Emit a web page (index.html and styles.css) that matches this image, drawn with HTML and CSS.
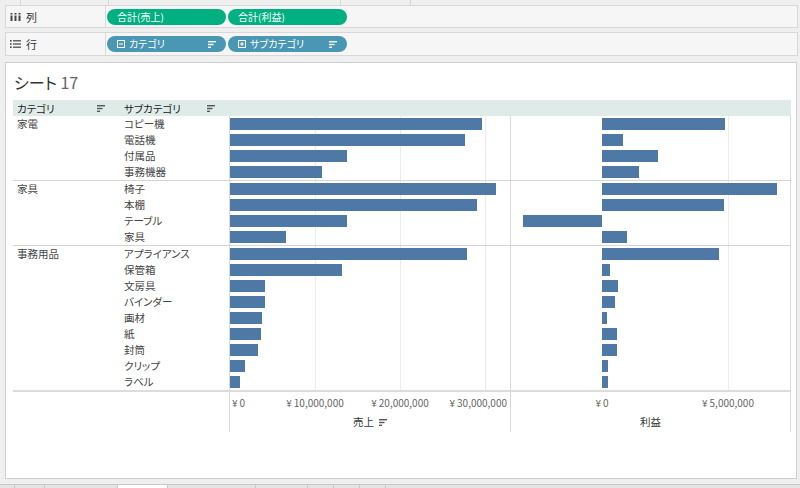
FILE: index.html
```html
<!DOCTYPE html>
<html lang="ja">
<head>
<meta charset="utf-8">
<title>シート 17</title>
<link rel="stylesheet" href="styles.css">
</head>
<body>
<div class="toolbar"><span class="tb tb1"></span><span class="tb tb2"></span><span class="tb tb3"></span><span class="tb tb4"></span></div>

<div class="shelf shelf1">
  <div class="shelf-label">
    <svg class="shelf-icon" width="11" height="8" viewBox="0 0 11 8"><rect x="0.5" y="0" width="2" height="1.5"/><rect x="4.5" y="0" width="2" height="1.5"/><rect x="8.5" y="0" width="2" height="1.5"/><rect x="0.5" y="2.5" width="2" height="5.5"/><rect x="4.5" y="2.5" width="2" height="5.5"/><rect x="8.5" y="2.5" width="2" height="5.5"/></svg>
    <span>列</span>
  </div>
  <div class="shelf-pills">
    <div class="pill green"><span>合計(売上)</span></div>
    <div class="pill green"><span>合計(利益)</span></div>
  </div>
</div>

<div class="shelf shelf2">
  <div class="shelf-label">
    <svg class="shelf-icon" width="11" height="8" viewBox="0 0 11 8"><rect x="0" y="0" width="1.6" height="1.6"/><rect x="3" y="0.2" width="8" height="1.2"/><rect x="0" y="3.2" width="1.6" height="1.6"/><rect x="3" y="3.4" width="8" height="1.2"/><rect x="0" y="6.4" width="1.6" height="1.6"/><rect x="3" y="6.6" width="8" height="1.2"/></svg>
    <span>行</span>
  </div>
  <div class="shelf-pills">
    <div class="pill blue">
      <svg class="pm" width="8" height="8" viewBox="0 0 8 8"><rect x="0.5" y="0.5" width="7" height="7" fill="none" stroke="#fff" stroke-width="1"/><rect x="2" y="3.5" width="4" height="1" fill="#fff"/></svg>
      <span>カテゴリ</span>
      <svg class="sort" width="8" height="7" viewBox="0 0 8 7"><rect x="0" y="0" width="8" height="1.4"/><rect x="0" y="2.8" width="5.5" height="1.4"/><rect x="0" y="5.6" width="3" height="1.4"/></svg>
    </div>
    <div class="pill blue">
      <svg class="pm" width="8" height="8" viewBox="0 0 8 8"><rect x="0.5" y="0.5" width="7" height="7" fill="none" stroke="#fff" stroke-width="1"/><rect x="2" y="3.5" width="4" height="1" fill="#fff"/><rect x="3.5" y="2" width="1" height="4" fill="#fff"/></svg>
      <span>サブカテゴリ</span>
      <svg class="sort" width="8" height="7" viewBox="0 0 8 7"><rect x="0" y="0" width="8" height="1.4"/><rect x="0" y="2.8" width="5.5" height="1.4"/><rect x="0" y="5.6" width="3" height="1.4"/></svg>
    </div>
  </div>
</div>

<div class="panel">
  <div class="title">シート <span class="num">17</span></div>
  <div class="table">
    <div class="cols header">
      <div class="hcell hcat"><span>カテゴリ</span><svg class="sort" width="8" height="7" viewBox="0 0 8 7"><rect x="0" y="0" width="8" height="1.4"/><rect x="0" y="2.8" width="5.5" height="1.4"/><rect x="0" y="5.6" width="3" height="1.4"/></svg></div>
      <div class="hcell hsub"><span>サブカテゴリ</span><svg class="sort" width="8" height="7" viewBox="0 0 8 7"><rect x="0" y="0" width="8" height="1.4"/><rect x="0" y="2.8" width="5.5" height="1.4"/><rect x="0" y="5.6" width="3" height="1.4"/></svg></div>
      <div></div><div></div>
    </div>

    <div class="cols group">
      <div class="cat span4">家電</div>
      <div class="sub">コピー機</div><div class="p1"><div class="bar" style="width:252px"></div></div><div class="p2"><div class="neg"></div><div class="pos"><div class="bar" style="width:123px"></div></div></div>
      <div class="sub">電話機</div><div class="p1"><div class="bar" style="width:235px"></div></div><div class="p2"><div class="neg"></div><div class="pos"><div class="bar" style="width:21px"></div></div></div>
      <div class="sub">付属品</div><div class="p1"><div class="bar" style="width:117px"></div></div><div class="p2"><div class="neg"></div><div class="pos"><div class="bar" style="width:56px"></div></div></div>
      <div class="sub">事務機器</div><div class="p1"><div class="bar" style="width:92px"></div></div><div class="p2"><div class="neg"></div><div class="pos"><div class="bar" style="width:37px"></div></div></div>
    </div>
    <div class="sep"></div>
    <div class="cols group">
      <div class="cat span4">家具</div>
      <div class="sub">椅子</div><div class="p1"><div class="bar" style="width:266px"></div></div><div class="p2"><div class="neg"></div><div class="pos"><div class="bar" style="width:175px"></div></div></div>
      <div class="sub">本棚</div><div class="p1"><div class="bar" style="width:247px"></div></div><div class="p2"><div class="neg"></div><div class="pos"><div class="bar" style="width:122px"></div></div></div>
      <div class="sub">テーブル</div><div class="p1"><div class="bar" style="width:117px"></div></div><div class="p2"><div class="neg"><div class="bar" style="width:79px"></div></div><div class="pos"></div></div>
      <div class="sub">家具</div><div class="p1"><div class="bar" style="width:56px"></div></div><div class="p2"><div class="neg"></div><div class="pos"><div class="bar" style="width:25px"></div></div></div>
    </div>
    <div class="sep"></div>
    <div class="cols group">
      <div class="cat span9">事務用品</div>
      <div class="sub">アプライアンス</div><div class="p1"><div class="bar" style="width:237px"></div></div><div class="p2"><div class="neg"></div><div class="pos"><div class="bar" style="width:117px"></div></div></div>
      <div class="sub">保管箱</div><div class="p1"><div class="bar" style="width:112px"></div></div><div class="p2"><div class="neg"></div><div class="pos"><div class="bar" style="width:8px"></div></div></div>
      <div class="sub">文房具</div><div class="p1"><div class="bar" style="width:35px"></div></div><div class="p2"><div class="neg"></div><div class="pos"><div class="bar" style="width:16px"></div></div></div>
      <div class="sub">バインダー</div><div class="p1"><div class="bar" style="width:35px"></div></div><div class="p2"><div class="neg"></div><div class="pos"><div class="bar" style="width:13px"></div></div></div>
      <div class="sub">画材</div><div class="p1"><div class="bar" style="width:32px"></div></div><div class="p2"><div class="neg"></div><div class="pos"><div class="bar" style="width:5px"></div></div></div>
      <div class="sub">紙</div><div class="p1"><div class="bar" style="width:31px"></div></div><div class="p2"><div class="neg"></div><div class="pos"><div class="bar" style="width:15px"></div></div></div>
      <div class="sub">封筒</div><div class="p1"><div class="bar" style="width:28px"></div></div><div class="p2"><div class="neg"></div><div class="pos"><div class="bar" style="width:15px"></div></div></div>
      <div class="sub">クリップ</div><div class="p1"><div class="bar" style="width:15px"></div></div><div class="p2"><div class="neg"></div><div class="pos"><div class="bar" style="width:6px"></div></div></div>
      <div class="sub">ラベル</div><div class="p1"><div class="bar" style="width:10px"></div></div><div class="p2"><div class="neg"></div><div class="pos"><div class="bar" style="width:6px"></div></div></div>
    </div>
    <div class="axisline"></div>
    <div class="cols axis">
      <div></div><div></div>
      <div class="ap1">
        <div class="ticks"><span class="t t0"><span class="yen">¥</span>0</span><span class="t t1"><span class="yen">¥</span>10,000,000</span><span class="t t2"><span class="yen">¥</span>20,000,000</span><span class="t t3"><span class="yen">¥</span>30,000,000</span></div>
        <div class="atitle"><span>売上</span><svg class="sort" width="8" height="7" viewBox="0 0 8 7"><rect x="0" y="0" width="8" height="1.4"/><rect x="0" y="2.8" width="5.5" height="1.4"/><rect x="0" y="5.6" width="3" height="1.4"/></svg></div>
      </div>
      <div class="ap2">
        <div class="ticks"><span class="t u0"><span class="yen">¥</span>0</span><span class="t u1"><span class="yen">¥</span>5,000,000</span></div>
        <div class="atitle"><span>利益</span></div>
      </div>
    </div>
  </div>
</div>

<div class="tabs"><span class="tab w14"></span><span class="tab w29"></span><span class="tab w72"></span><span class="tab active"></span><span class="tab w87"></span><span class="tab w51"></span><span class="tab w25"></span><span class="tab w25"></span><span class="tab w25"></span></div>
</body>
</html>
```

FILE: styles.css
```css
html, body {
  margin: 0;
  padding: 0;
}
body {
  width: 800px;
  height: 488px;
  overflow: hidden;
  background: #efefef;
  font-family: "Noto Sans CJK JP", "Noto Sans", sans-serif;
  font-feature-settings: "palt";
  display: flex;
  flex-direction: column;
}

/* top remnant toolbar */
.toolbar {
  height: 5px;
  display: flex;
  flex-shrink: 0;
}
.tb { border-right: 1px solid #d6d6d6; }
.tb1 { width: 20px; }
.tb2 { width: 87px; }
.tb3 { width: 231px; }
.tb4 { width: 69px; }

/* shelves */
.shelf {
  margin-left: 5px;
  width: 793px;
  box-sizing: border-box;
  border: 1px solid #d8d8d8;
  background: #f6f6f6;
  display: flex;
  flex-shrink: 0;
}
.shelf1 { height: 23px; }
.shelf2 { height: 24px; margin-top: 4px; }
.shelf-label {
  width: 100px;
  box-sizing: border-box;
  border-right: 1px solid #d8d8d8;
  display: flex;
  align-items: center;
  gap: 5px;
  padding-left: 4px;
  font-size: 11px;
  color: #333;
}
.shelf-icon { fill: #444; }
.shelf-pills {
  display: flex;
  align-items: center;
  gap: 2px;
  padding-left: 1px;
}
.pill {
  width: 119px;
  height: 16px;
  box-sizing: border-box;
  border-radius: 8px;
  display: flex;
  align-items: center;
  padding: 0 10px;
  color: #fff;
  font-size: 10px;
  line-height: 16px;
  white-space: nowrap;
}
.pill .pm { margin-right: 4px; flex-shrink: 0; }
.pill .sort { margin-left: auto; fill: #fff; }
.green { background: #00b080; }
.blue { background: #4a97b3; }

/* worksheet panel */
.panel {
  margin: 6px 0 0 5px;
  width: 792px;
  height: 417px;
  box-sizing: border-box;
  border: 1px solid #d0d0d0;
  background: #fff;
  flex-shrink: 0;
}
.title {
  margin: 9px 0 0 8px;
  height: 20px;
  line-height: 20px;
  font-size: 16px;
  color: #333;
}
.title .num { color: #666; }
.table {
  margin: 8px 0 0 7px;
  width: 778px;
}
.cols {
  display: grid;
  grid-template-columns: 107px 109px 281px 281px;
}
.header {
  height: 16px;
  background: #deebe8;
  font-size: 10.5px;
  color: #222;
}
.hcell {
  display: flex;
  align-items: center;
  justify-content: space-between;
  padding-left: 4px;
  white-space: nowrap;
}
.hcat { padding-right: 15px; }
.hsub { padding-right: 14px; }
.sort { fill: #555; flex-shrink: 0; }

.group { grid-auto-rows: 16px; }
.span4 { grid-row: span 4; }
.span9 { grid-row: span 9; }
.cat, .sub {
  padding-left: 4px;
  font-size: 10.5px;
  line-height: 16px;
  color: #444;
  white-space: nowrap;
}
.p1, .p2 {
  border-left: 1px solid #dadada;
}
.p1 {
  display: flex;
  align-items: center;
  background-image: linear-gradient(90deg,
    transparent 85px, #ececec 85px, #ececec 86px, transparent 86px,
    transparent 170px, #ececec 170px, #ececec 171px, transparent 171px,
    transparent 255px, #ececec 255px, #ececec 256px, transparent 256px);
}
.p2 {
  border-right: 1px solid #dadada;
  display: grid;
  grid-template-columns: 91px 1fr;
  align-items: center;
  background-image: linear-gradient(90deg,
    transparent 217px, #ececec 217px, #ececec 218px, transparent 218px);
}
.neg { display: flex; justify-content: flex-end; }
.pos { display: flex; }
.bar {
  height: 12px;
  background: #4e79a7;
}
.sep {
  height: 1px;
  background: #d4d4d4;
}
.axisline {
  height: 2px;
  background: #dcdcdc;
}
.axis { height: 40px; }
.ap1, .ap2 { border-left: 1px solid #dadada; }
.ap2 { border-right: 1px solid #dadada; }
.ticks {
  display: flex;
  margin-top: 4px;
  height: 14px;
  line-height: 14px;
  font-size: 10px;
  color: #666;
  white-space: nowrap;
}
.yen { margin-right: 2px; }
.t { display: block; flex-shrink: 0; }
.t0 { width: 40px; padding-left: 2px; }
.t1 { width: 86px; text-align: center; }
.t2 { width: 84px; text-align: center; }
.t3 { flex: 1; text-align: right; padding-right: 3px; }
.u0 { width: 182px; text-align: center; }
.u1 { width: 70px; text-align: center; }
.atitle {
  margin-top: 5px;
  height: 14px;
  line-height: 14px;
  display: flex;
  justify-content: center;
  align-items: center;
  gap: 5px;
  font-size: 10.5px;
  color: #333;
}

/* bottom tabs */
.tabs {
  margin-top: 5px;
  height: 4px;
  box-sizing: border-box;
  border-top: 1px solid #c8c8c8;
  background: #e4e4e4;
  display: flex;
  flex-shrink: 0;
}
.tab { border-right: 1px solid #c8c8c8; }
.w14 { width: 14px; }
.w29 { width: 29px; }
.w72 { width: 72px; }
.w87 { width: 87px; }
.w51 { width: 51px; }
.w25 { width: 25px; }
.active { width: 49px; background: #fff; }
```
